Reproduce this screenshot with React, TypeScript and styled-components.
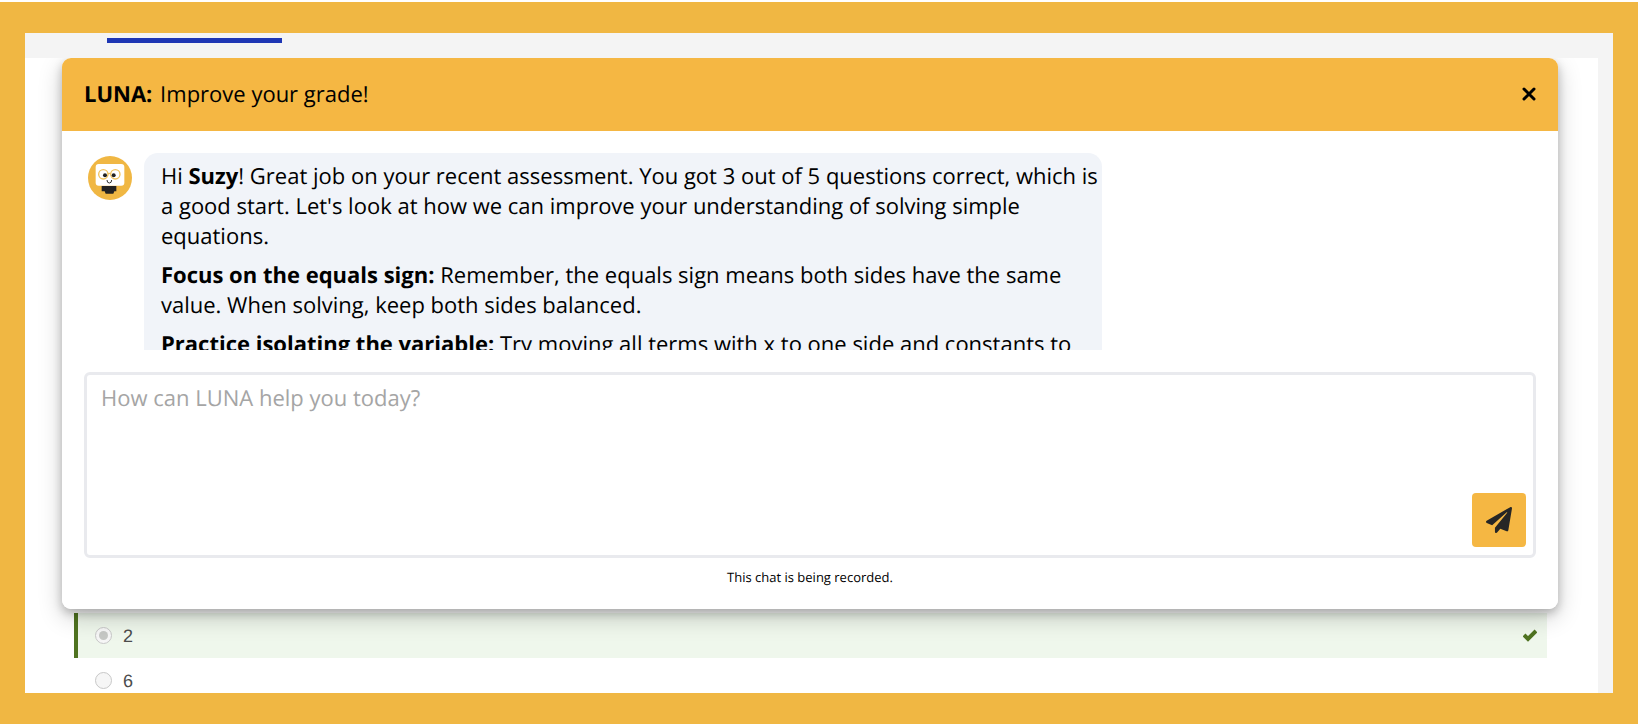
import React from "react";
import styled, { createGlobalStyle } from "styled-components";

const GlobalStyle = createGlobalStyle`
  *, *::before, *::after { box-sizing: border-box; }
  body {
    margin: 0;
    background: #fff;
    color: #000;
    font-family: "Open Sans", "Noto Sans", sans-serif;
    text-rendering: geometricPrecision;
  }
`;

const Frame = styled.div`
  display: flex;
  min-height: 100vh;
  padding: 31px 25px;
  border-top: 2px solid #fff;
  background: #f0b743;
`;

const Page = styled.div`
  position: relative;
  display: flex;
  flex: 1;
  flex-direction: column;
  padding-right: 15px;
  overflow: hidden;
  background: #f4f4f4;
`;

const TabStrip = styled.nav`
  height: 25px;
  padding: 5px 0 0 82px;
`;

const ActiveTab = styled.div`
  width: 175px;
  height: 5px;
  background: #1e36b4;
`;

const Quiz = styled.main`
  display: flex;
  flex: 1;
  flex-direction: column;
  justify-content: flex-end;
  padding: 0 51px 0 49px;
  background: #fff;
`;

const Answers = styled.fieldset`
  min-width: 0;
  margin: 0 0 -10px;
  padding: 0;
  border: 0;
`;

const Answer = styled.label<{ $correct?: boolean }>`
  display: flex;
  align-items: center;
  gap: 11px;
  height: 45px;
  padding: 0 10px 0 17px;
  border-left: 4px solid ${(p) => (p.$correct ? "#4f7320" : "transparent")};
  background: ${(p) => (p.$correct ? "#eff7ec" : "transparent")};
  color: #4c4c4c;
  font: 18px/24px "Liberation Sans", Arial, sans-serif;

  svg { margin-left: auto; }
`;

const Radio = styled.input`
  appearance: none;
  display: grid;
  place-items: center;
  width: 17px;
  height: 17px;
  margin: 0;
  border: 1px solid #c8c8c8;
  border-radius: 50%;
  background: #f6f6f6;

  &:checked::before {
    content: "";
    width: 9px;
    height: 9px;
    border-radius: 50%;
    background: #c6c8c5;
  }
`;

const Dialog = styled.section`
  position: absolute;
  inset: 25px 55px 84px 37px;
  display: flex;
  flex-direction: column;
  overflow: hidden;
  border-radius: 9px;
  background: #fff;
`;

const DialogShadow = styled.div`
  position: absolute;
  inset: 25px 0 0;
  overflow: hidden;

  &::before {
    content: "";
    position: absolute;
    inset: 0 55px 84px 37px;
    border-radius: 9px;
    box-shadow: 0 4px 10px rgba(0, 0, 0, 0.22), 0 8px 24px rgba(0, 0, 0, 0.2);
  }
`;

const Header = styled.header`
  display: flex;
  align-items: center;
  justify-content: space-between;
  flex: none;
  height: 73px;
  padding: 0 19px 2px 22px;
  background: #f5b743;
`;

const Title = styled.h1`
  margin: 0;
  font-size: 22px;
  font-weight: 400;
  line-height: 30px;

  b { margin-right: 2px; }
`;

const CloseButton = styled.button`
  display: grid;
  place-items: center;
  width: 20px;
  height: 20px;
  padding: 0;
  border: 0;
  background: none;
`;

const Log = styled.div`
  display: flex;
  flex: 1;
  align-items: flex-start;
  gap: 12px;
  min-height: 0;
  margin: 22px 22px 0;
  padding-left: 4px;
  overflow: hidden;
`;

const Avatar = styled.svg`
  flex: none;
  width: 44px;
  height: 44px;
  margin-top: 3px;
`;

const Bubble = styled.div`
  width: calc(70% - 56px);
  padding: 8px 2px 8px 17px;
  border-radius: 14px;
  background: #f1f4f9;
  font-size: 22px;
  line-height: 30px;

  p { margin: 0 0 9px; }
`;

const Composer = styled.form`
  display: grid;
  flex: none;
  margin: 22px 22px 0;
`;

const Prompt = styled.textarea`
  grid-area: 1 / 1;
  height: 186px;
  padding: 8px 14px;
  border: 3px solid #e9eaee;
  border-radius: 6px;
  resize: none;
  background: #fff;
  font: 22px/30px "Open Sans", "Noto Sans", sans-serif;
  text-rendering: inherit;

  &::placeholder { color: #a5a5a5; opacity: 1; }
`;

const SendButton = styled.button`
  display: grid;
  grid-area: 1 / 1;
  place-items: center;
  place-self: end;
  width: 54px;
  height: 54px;
  margin: 0 10px 11px 0;
  padding: 0;
  border: 0;
  border-radius: 4px;
  background: #f5b743;
`;

const Notice = styled.p`
  flex: none;
  margin: 9px 0 22px;
  font-size: 13px;
  line-height: 20px;
  text-align: center;
`;

function Luna() {
  return (
    <Avatar viewBox="0 0 132 132" role="img" aria-label="LUNA">
      <circle cx="66" cy="66" r="66" fill="#f0b743" />
      <rect x="23" y="24" width="86" height="65" rx="9" fill="#fff" />
      <g fill="none" stroke="#f0c25c" strokeWidth="4">
        <circle cx="46" cy="55" r="14" />
        <circle cx="82" cy="55" r="14" />
        <path d="M60 54q4-4 8 0" />
      </g>
      <circle cx="51" cy="58" r="6" fill="#222" />
      <circle cx="77" cy="58" r="6" fill="#222" />
      <path d="M57 72q0 9 7 9t7-9" fill="none" stroke="#333" strokeWidth="3" />
      <path d="M41 90h44v16h-6l-3 7H53l-3-7h-9z" fill="#222" />
    </Avatar>
  );
}

export default function App() {
  return (
    <>
      <GlobalStyle />
      <Frame>
        <Page>
          <TabStrip>
            <ActiveTab />
          </TabStrip>
          <Quiz>
            <Answers disabled>
              <Answer $correct>
                <Radio type="radio" name="answer" defaultChecked />
                2
                <svg width="14" height="14" viewBox="0 0 14 14" aria-hidden="true">
                  <path d="M1 6l4 4 8-8" fill="none" stroke="#4f7320" strokeWidth="4" />
                </svg>
              </Answer>
              <Answer>
                <Radio type="radio" name="answer" />
                6
              </Answer>
            </Answers>
          </Quiz>
          <DialogShadow />
          <Dialog role="dialog" aria-label="LUNA">
            <Header>
              <Title>
                <b>LUNA:</b> Improve your grade!
              </Title>
              <CloseButton type="button" aria-label="Close">
                <svg width="14" height="14" viewBox="0 0 14 14">
                  <path d="M2 2l10 10M12 2L2 12" stroke="#000" strokeWidth="3" strokeLinecap="round" />
                </svg>
              </CloseButton>
            </Header>
            <Log>
              <Luna />
              <Bubble>
                <p>
                  Hi <b>Suzy</b>! Great job on your recent assessment. You got 3 out of 5 questions
                  correct, which is a good start. Let's look at how we can improve your understanding
                  of solving simple equations.
                </p>
                <p>
                  <b>Focus on the equals sign:</b> Remember, the equals sign means both sides have the
                  same value. When solving, keep both sides balanced.
                </p>
                <p>
                  <b>Practice isolating the variable:</b> Try moving all terms with x to one side and
                  constants to
                </p>
              </Bubble>
            </Log>
            <Composer>
              <Prompt aria-label="Message" placeholder="How can LUNA help you today?" />
              <SendButton type="button" aria-label="Send">
                <svg width="26" height="26" viewBox="0 0 512 512">
                  <path
                    fill="#262626"
                    d="M476 3.200L12.500 270.600c-18.100 10.400-15.800 35.600 2.200 43.200L121 358.400l287.300-253.200c5.500-4.900 13.300 2.600 8.600 8.300L176 407v80.500c0 23.600 28.500 32.900 42.500 15.800L282 426l124.600 52.200c14.200 6 30.400-2.900 33-18.200l72-432C515 7.800 493.300-6.800 476 3.200z"
                  />
                </svg>
              </SendButton>
            </Composer>
            <Notice>This chat is being recorded.</Notice>
          </Dialog>
        </Page>
      </Frame>
    </>
  );
}
